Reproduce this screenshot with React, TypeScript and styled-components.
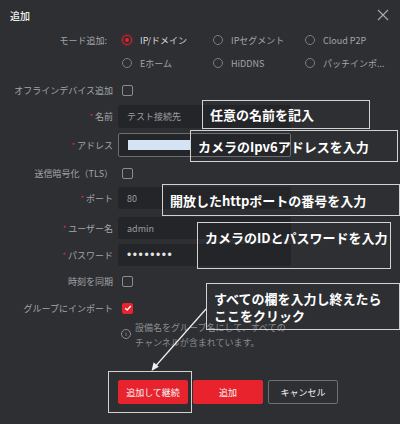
import React from "react";
import styled, { createGlobalStyle } from "styled-components";

const GlobalStyle = createGlobalStyle`
  html, body {
    margin: 0;
    padding: 0;
    background: #2d2f33;
  }
  * {
    box-sizing: border-box;
  }
`;

const FONT = `"Noto Sans CJK JP", "Noto Sans", sans-serif`;
const RED = "#e8232d";

const Dialog = styled.div`
  position: relative;
  width: 400px;
  height: 424px;
  overflow: hidden;
  background: #2d2f33;
  font-family: ${FONT};
  color: #a3a5a9;
`;

const Header = styled.div`
  height: 30px;
  display: flex;
  align-items: center;
  justify-content: space-between;
  padding: 0 10px 0 10px;
`;

const Title = styled.div`
  font-size: 10px;
  color: #f2f2f2;
  font-weight: 500;
`;

const Close = styled.div`
  width: 12px;
  height: 12px;
  display: flex;
  margin-right: 1px;
`;

const Form = styled.div`
  display: flex;
  flex-direction: column;
`;

const Row = styled.div<{ $h: number; $mt: number }>`
  display: grid;
  grid-template-columns: 113px 1fr;
  column-gap: 5px;
  align-items: center;
  height: ${(p) => p.$h}px;
  margin-top: ${(p) => p.$mt}px;
`;

const Label = styled.div<{ $pr?: number }>`
  font-size: 9px;
  text-align: right;
  white-space: nowrap;
  color: #a3a5a9;
  padding-right: ${(p) => p.$pr || 0}px;
`;

const Star = styled.span`
  color: ${RED};
  margin-right: 2px;
  font-size: 8px;
`;

const RadioGrid = styled.div`
  display: grid;
  grid-template-columns: 91px 92px 90px;
  align-items: center;
  padding-left: 4px;
`;

const RadioItem = styled.div`
  display: flex;
  align-items: center;
  gap: 8px;
  font-size: 9px;
  color: #a3a5a9;
  white-space: nowrap;
`;

const RadioCircle = styled.span<{ $on?: boolean }>`
  width: 10px;
  height: 10px;
  border-radius: 50%;
  border: 1px solid ${(p) => (p.$on ? RED : "#7c7e82")};
  display: flex;
  align-items: center;
  justify-content: center;
  box-shadow: ${(p) => (p.$on ? "0 0 3px rgba(232,35,45,0.7)" : "none")};
  &::after {
    content: "";
    width: 4px;
    height: 4px;
    border-radius: 50%;
    background: ${(p) => (p.$on ? RED : "transparent")};
  }
`;

const RadioText = styled.span<{ $on?: boolean }>`
  color: ${(p) => (p.$on ? "#d8d8d8" : "#a3a5a9")};
`;

const Check = styled.span<{ $on?: boolean }>`
  width: 11px;
  height: 11px;
  margin-left: 4px;
  border-radius: 2px;
  border: 1px solid ${(p) => (p.$on ? RED : "#8a8c90")};
  background: ${(p) => (p.$on ? RED : "transparent")};
  display: flex;
  align-items: center;
  justify-content: center;
`;

const Input = styled.div<{ $focus?: boolean; $h: number }>`
  width: 173px;
  height: ${(p) => p.$h}px;
  background: #242528;
  border: 1px solid ${(p) => (p.$focus ? "#6c6e72" : "#242528")};
  border-radius: 2px;
  display: flex;
  align-items: center;
  padding-left: 8px;
  font-size: 9px;
  color: #9a9ca0;
`;

const Dots = styled.span`
  color: #e6e6e6;
  font-family: "Liberation Sans", sans-serif;
  font-size: 12px;
  letter-spacing: 1.6px;
`;

const Redacted = styled.span`
  width: 62px;
  height: 10px;
  margin-left: 1px;
  background: #d4e4f4;
`;

const Info = styled.div`
  display: flex;
  gap: 4px;
  padding-left: 121px;
  margin-top: 2px;
`;

const InfoIcon = styled.span`
  width: 10px;
  height: 10px;
  margin-top: 9px;
  border-radius: 50%;
  border: 1px solid #8a8c90;
  color: #8a8c90;
  font-size: 7px;
  line-height: 8px;
  text-align: center;
  font-family: "Liberation Serif", serif;
`;

const InfoText = styled.div`
  font-size: 9px;
  line-height: 15px;
  color: #8a8c90;
`;

const Footer = styled.div`
  display: flex;
  gap: 5px;
  padding-left: 118px;
  margin-top: 30px;
`;

const Button = styled.div<{ $primary?: boolean }>`
  width: 70px;
  height: 24px;
  display: flex;
  align-items: center;
  justify-content: center;
  font-size: 9px;
  border-radius: 2px;
  color: #f4f4f4;
  background: ${(p) => (p.$primary ? RED : "transparent")};
  border: 1px solid ${(p) => (p.$primary ? RED : "#6e7074")};
`;

const Note = styled.div<{ $x: number; $y: number; $w: number; $h: number; $center?: boolean }>`
  position: absolute;
  left: ${(p) => p.$x}px;
  top: ${(p) => p.$y}px;
  width: ${(p) => p.$w}px;
  height: ${(p) => p.$h}px;
  border: 1px solid #d2d2d2;
  display: flex;
  align-items: ${(p) => (p.$center ? "center" : "flex-start")};
  padding: ${(p) => (p.$center ? "0 0 0 7px" : "6px 0 0 7px")};
  font-size: 13px;
  line-height: 17px;
  font-weight: 700;
  color: #ffffff;
  white-space: nowrap;
`;

const Frame = styled.div`
  position: absolute;
  left: 108px;
  top: 371px;
  width: 84px;
  height: 42px;
  border: 1px solid #d2d2d2;
`;

const ArrowSvg = styled.svg`
  position: absolute;
  left: 0;
  top: 0;
  pointer-events: none;
`;

export default function App() {
  return (
    <>
      <GlobalStyle />
      <Dialog>
        <Header>
          <Title>追加</Title>
          <Close>
            <svg width="12" height="12" viewBox="0 0 12 12">
              <path d="M1 1L11 11M11 1L1 11" stroke="#a8aaae" strokeWidth="1.1" />
            </svg>
          </Close>
        </Header>

        <Form>
          <Row $h={20} $mt={0}>
            <Label $pr={6}>モード追加:</Label>
            <RadioGrid>
              <RadioItem>
                <RadioCircle $on />
                <RadioText $on>IP/ドメイン</RadioText>
              </RadioItem>
              <RadioItem>
                <RadioCircle />
                <RadioText>IPセグメント</RadioText>
              </RadioItem>
              <RadioItem>
                <RadioCircle />
                <RadioText>Cloud P2P</RadioText>
              </RadioItem>
            </RadioGrid>
          </Row>
          <Row $h={20} $mt={3}>
            <Label />
            <RadioGrid>
              <RadioItem>
                <RadioCircle />
                <RadioText>Eホーム</RadioText>
              </RadioItem>
              <RadioItem>
                <RadioCircle />
                <RadioText>HiDDNS</RadioText>
              </RadioItem>
              <RadioItem>
                <RadioCircle />
                <RadioText>パッチインポ...</RadioText>
              </RadioItem>
            </RadioGrid>
          </Row>
          <Row $h={20} $mt={7}>
            <Label>オフラインデバイス追加</Label>
            <Check />
          </Row>
          <Row $h={23} $mt={5}>
            <Label>
              <Star>*</Star>名前
            </Label>
            <Input $h={23}>テスト接続先</Input>
          </Row>
          <Row $h={24} $mt={5}>
            <Label>
              <Star>*</Star>アドレス
            </Label>
            <Input $h={24} $focus>
              <Redacted />
            </Input>
          </Row>
          <Row $h={20} $mt={6}>
            <Label>送信暗号化（TLS）</Label>
            <Check />
          </Row>
          <Row $h={22} $mt={4}>
            <Label>
              <Star>*</Star>ポート
            </Label>
            <Input $h={22}>80</Input>
          </Row>
          <Row $h={22} $mt={8}>
            <Label>
              <Star>*</Star>ユーザー名
            </Label>
            <Input $h={22}>admin</Input>
          </Row>
          <Row $h={22} $mt={5}>
            <Label>
              <Star>*</Star>パスワード
            </Label>
            <Input $h={22}>
              <Dots>••••••••</Dots>
            </Input>
          </Row>
          <Row $h={20} $mt={5}>
            <Label>時刻を同期</Label>
            <Check />
          </Row>
          <Row $h={20} $mt={7}>
            <Label>グループにインポート</Label>
            <Check $on>
              <svg width="8" height="8" viewBox="0 0 8 8">
                <path d="M1.2 4.2L3.2 6L6.8 2" stroke="#fff" strokeWidth="1.4" fill="none" />
              </svg>
            </Check>
          </Row>
          <Info>
            <InfoIcon>i</InfoIcon>
            <InfoText>
              設備名をグループ名にして、すべての
              <br />
              チャンネルが含まれています。
            </InfoText>
          </Info>
        </Form>

        <Footer>
          <Button $primary>追加して継続</Button>
          <Button $primary>追加</Button>
          <Button>キャンセル</Button>
        </Footer>

        <Note $x={202} $y={100} $w={168} $h={29} $center>
          任意の名前を記入
        </Note>
        <Note $x={190} $y={130} $w={208} $h={32} $center>
          カメラのIpv6アドレスを入力
        </Note>
        <Note $x={162} $y={184} $w={238} $h={32} $center>
          開放したhttpポートの番号を入力
        </Note>
        <Note $x={197} $y={222} $w={194} $h={47}>
          カメラのIDとパスワードを入力
        </Note>
        <Note $x={206} $y={283} $w={194} $h={47}>
          すべての欄を入力し終えたら
          <br />
          ここをクリック
        </Note>
        <Frame />
        <ArrowSvg width="400" height="424" viewBox="0 0 400 424">
          <path d="M206 309L153 369" stroke="#f0f0f0" strokeWidth="1.2" />
          <path d="M151.5 371L153.6 362.2L158.8 366.8Z" fill="#f0f0f0" />
        </ArrowSvg>
      </Dialog>
    </>
  );
}
